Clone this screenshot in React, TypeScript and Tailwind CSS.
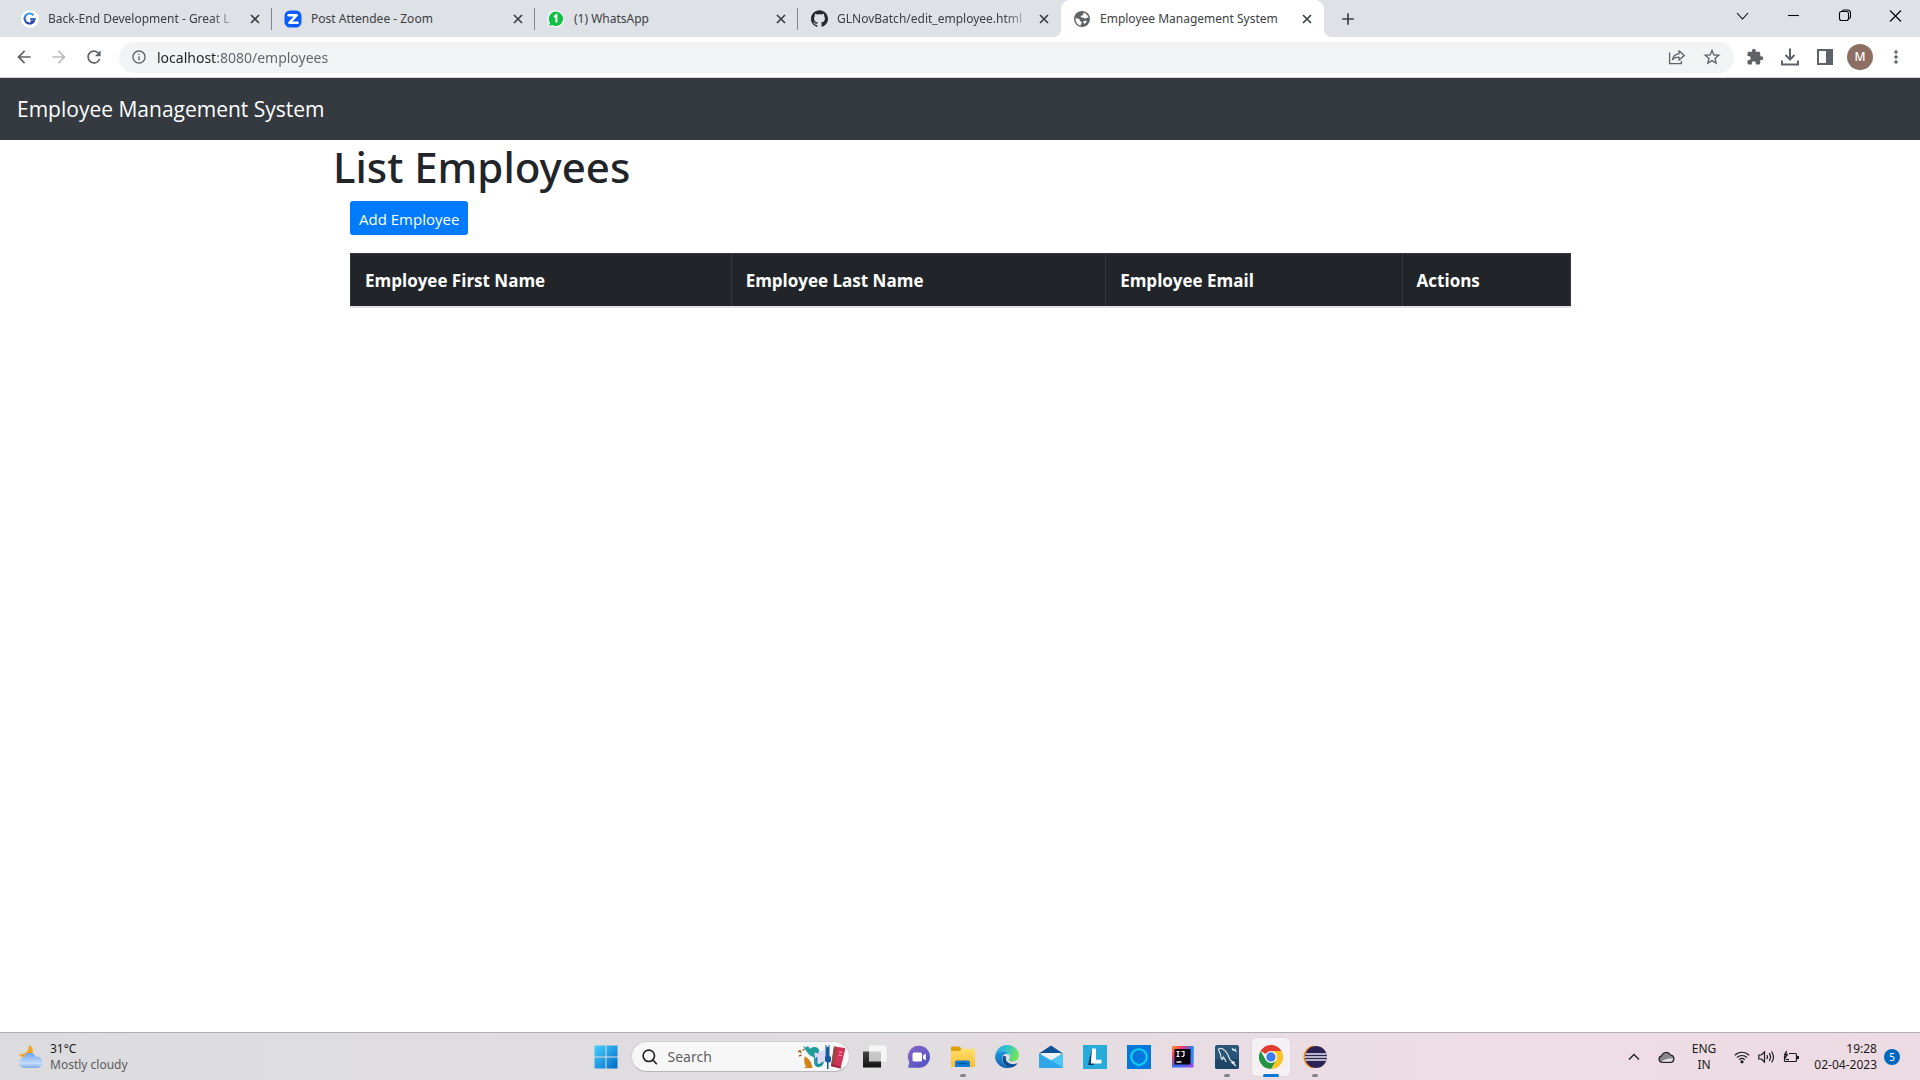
import React from "react";
import { MdArrowBack, MdArrowForward, MdRefresh, MdInfoOutline, MdStarBorder, MdExtension, MdMoreVert, MdAdd } from "react-icons/md";
import { SiGithub } from "react-icons/si";

type TabInfo = { title: string; icon: React.ReactNode; active?: boolean; fade?: boolean; divider?: boolean };

const GreatLearningIcon = () => (
  <svg viewBox="0 0 18 18" className="size-[18px]">
    <defs>
      <linearGradient id="gl" x1="0" y1="0" x2="0" y2="1">
        <stop offset="0" stopColor="#3aa0ea" />
        <stop offset="1" stopColor="#2a3fae" />
      </linearGradient>
    </defs>
    <circle cx="9" cy="9" r="9" fill="#fff" />
    <path d="M12.4 5.2A5 5 0 1 0 13.6 9H9.2" fill="none" stroke="url(#gl)" strokeWidth="2.2" />
    <path d="M9.5 11.2h3.6" stroke="#2a3fae" strokeWidth="1.6" />
  </svg>
);

const ZoomIcon = () => (
  <svg viewBox="0 0 18 18" className="size-[18px]">
    <rect x="0.5" y="0.5" width="17" height="17" rx="5.5" fill="#0b5cff" />
    <path d="M4.500 5.200h8.200L5.400 12.800h8.200" fill="none" stroke="#fff" strokeWidth="2.5" strokeLinejoin="round" strokeLinecap="round" />
  </svg>
);

const WhatsAppIcon = () => (
  <svg viewBox="0 0 18 18" className="size-[18px]">
    <path d="M9 .5A8.300 8.300 0 0 1 9 17.200c-1.500 0-2.800-.3-4-1L.5 17.500 1.800 13.200A8.300 8.300 0 0 1 9 .5z" fill="#fff" />
    <path d="M9 1.600a7.200 7.200 0 1 1-3.700 13.500L2 16l1-3.200A7.200 7.200 0 0 1 9 1.600z" fill="#0ec143" />
    <path d="M7 6.800 9.400 5.200v7.400" fill="none" stroke="#fff" strokeWidth="2" />
  </svg>
);

const GlobeIcon = () => (
  <svg viewBox="0 0 16 16" className="size-4">
    <circle cx="8" cy="8" r="8" fill="#5f6368" />
    <path d="M1.500 7.300c1.500.2 3.300.2 4 1 .6.800-.2 1.500.8 2 1.200.4 1.700.8 1.200 1.900-.3.800-.8 1-.8 2.300C3.500 14 1.300 11 1.500 7.300z" fill="#fff" />
    <path d="M9.300 1.600c2.700.5 4.700 2.700 5.200 5.400-.8-.6-1.300-.7-1.900-.1-.8.800-2.200.8-2.900 0-.6-.7-1.800.1-2.700-.6-.8-.7-.1-1.700 1-1.700.9 0 .6-.9 1.200-1.400.5-.4.400-1 .1-1.600z" fill="#fff" />
    <path d="M9.300 10.300c.9-.8 2.500-.9 3.500-.2-.5 1.400-1.400 2.300-2.500 3-.3-1.100-1.200-1.400-1-2.800z" fill="#fff" />
  </svg>
);

const tabs: TabInfo[] = [
  { title: "Back-End Development - Great L", icon: <GreatLearningIcon />, fade: true, divider: true },
  { title: "Post Attendee - Zoom", icon: <ZoomIcon />, divider: true },
  { title: "(1) WhatsApp", icon: <WhatsAppIcon />, divider: true },
  { title: "GLNovBatch/edit_employee.html", icon: <SiGithub className="size-[17px] text-[#24292f]" />, fade: true },
  { title: "Employee Management System", icon: <GlobeIcon />, active: true },
];

function Tab({ title, icon, active, fade, divider }: TabInfo) {
  return (
    <div
      className={
        "relative flex h-full min-w-0 max-w-[263px] flex-1 items-center pr-[9px] pl-[11px] " +
        (active
          ? "rounded-t-[9px] bg-white before:absolute before:bottom-0 before:-left-2 before:size-2 before:bg-[radial-gradient(circle_at_0_0,transparent_8px,#fff_8px)] after:absolute after:-right-2 after:bottom-0 after:size-2 after:bg-[radial-gradient(circle_at_100%_0,transparent_8px,#fff_8px)]"
          : "")
      }
    >
      <span className="flex size-5 shrink-0 items-center justify-center">{icon}</span>
      <span className="ml-2 flex min-w-0 flex-1 overflow-hidden text-[12px] whitespace-nowrap text-[#3c4043]">
        <span className={fade ? "[mask-image:linear-gradient(to_right,#000_90%,#0005)]" : ""}>{title}</span>
      </span>
      <button aria-label={"Close " + title} className="ml-1 flex size-4 shrink-0 items-center justify-center text-[#3c4043]">
        <svg viewBox="0 0 16 16" className="size-4">
          <path d="M4 4l8 8M12 4l-8 8" stroke="currentColor" strokeWidth="1.700" />
        </svg>
      </button>
      {divider && <span className="absolute right-0 h-[22px] w-px bg-[#80868b]" />}
    </div>
  );
}

function BrowserChrome() {
  return (
    <header className="font-['Noto_Sans',sans-serif]">
      <div className="flex h-[37px] bg-[#dee1e6]">
        <div className="flex min-w-0 flex-1 pl-[9px]">
          {tabs.map((t) => (
            <Tab key={t.title} {...t} />
          ))}
          <button aria-label="New tab" className="ml-3 flex w-6 items-center justify-center text-[#3c4043]">
            <MdAdd className="size-5" />
          </button>
        </div>
        <div className="flex h-8 text-black">
          {[
            ["Search tabs", "M5 7l5.500 6 5.500-6"],
            ["Minimize", "M5 9.500h11"],
            ["Restore", "M5.500 7.500a2 2 0 0 1 2-2h5a2 2 0 0 1 2 2v5a2 2 0 0 1-2 2h-5a2 2 0 0 1-2-2zM8 5.500a2 2 0 0 1 2-1.500h3.500a3 3 0 0 1 3 3v3.500a2 2 0 0 1-1.500 2"],
            ["Close window", "M5 4.500l11 11M16 4.500l-11 11"],
          ].map(([label, d]) => (
            <button key={label} aria-label={label} className="flex w-[51px] items-center justify-center">
              <svg viewBox="0 0 20 20" className="size-5">
                <path d={d} fill="none" stroke="currentColor" strokeWidth="1.100" />
              </svg>
            </button>
          ))}
        </div>
      </div>
      <div className="flex h-[41px] items-center border-b border-[#d5d7db] bg-white px-[14px] text-[#5f6368]">
        <button aria-label="Back" className="mr-[15px]"><MdArrowBack className="size-5" /></button>
        <button aria-label="Forward" className="mr-[15px] text-[#babcbe]"><MdArrowForward className="size-5" /></button>
        <button aria-label="Reload" className="mr-[15px]"><MdRefresh className="size-5" /></button>
        <div className="flex h-[31px] flex-1 items-center rounded-full bg-[#f1f3f4] pr-3 pl-3">
          <MdInfoOutline className="size-4" />
          <input
            aria-label="Address"
            defaultValue="localhost:8080/employees"
            className="ml-[10px] min-w-0 flex-1 bg-[linear-gradient(to_right,#202124_60px,#5f6368_60px)] bg-clip-text text-[14px] text-transparent outline-none"
          />
          <button aria-label="Share" className="mr-[15px]">
            <svg viewBox="0 0 20 20" className="size-5" fill="none" stroke="currentColor" strokeWidth="1.300">
              <path d="M2.600 5.500v11.200h11.800v-3" />
              <path d="M5.500 12.500c.6-3.700 3-5.500 6.500-5.700V3.800l5.300 4.700-5.300 4.600v-2.900c-2.700 0-4.700.6-6.500 2.300z" strokeLinejoin="round" />
            </svg>
          </button>
          <button aria-label="Bookmark this tab"><MdStarBorder className="size-5" /></button>
        </div>
        <div className="ml-3 flex items-center gap-4">
          <button aria-label="Extensions"><MdExtension className="size-[18px]" /></button>
          <button aria-label="Downloads">
            <svg viewBox="0 0 20 20" className="size-5" fill="none" stroke="currentColor" strokeWidth="2">
              <path d="M10 1.500v10.500M5.500 8l4.500 4.500L14.500 8M2 13.500v4h16v-4" />
            </svg>
          </button>
          <button aria-label="Side panel">
            <svg viewBox="0 0 18 18" className="size-[18px]">
              <path d="M1 1h16v16H1zM3 3v12h7V3z" fill="currentColor" fillRule="evenodd" />
            </svg>
          </button>
          <button aria-label="Profile" className="-mx-[3px] flex size-[26px] items-center justify-center rounded-full bg-[#8d6e63] text-[12px] font-medium text-white">M</button>
          <button aria-label="Menu"><MdMoreVert className="size-5" /></button>
        </div>
      </div>
    </header>
  );
}

const columns = [
  { label: "Employee First Name", width: "w-[31.200%]" },
  { label: "Employee Last Name", width: "w-[30.700%]" },
  { label: "Employee Email", width: "w-[24.300%]" },
  { label: "Actions", width: "w-[13.800%]" },
];

function Page() {
  return (
    <main className="flex-1 bg-white font-['Open_Sans',sans-serif] text-[#212529]">
      <nav className="flex h-[62px] items-center bg-[#343a40] px-[17px] pt-[2px]">
        <a href="#" className="text-[21px] text-white">Employee Management System</a>
      </nav>
      <div className="mx-auto max-w-[1254px]">
        <h1 className="mb-2 font-['Noto_Sans',sans-serif] text-[42px] leading-[53px] font-medium">List Employees</h1>
        <div className="pr-4 pl-[17px]">
          <a href="#" className="inline-flex h-[34px] items-center rounded-[3px] bg-[#007bff] px-[9px] pt-[3px] text-[15px] text-white">Add Employee</a>
          <table className="mt-[18px] w-full table-fixed border-collapse">
            <thead className="bg-[#212529] text-white">
              <tr className="h-[53px] border-b-2 border-b-[#dee2e6]">
                {columns.map((c) => (
                  <th key={c.label} className={"border-x border-t border-[#32383e] px-[14px] pt-[2px] text-left text-[17px] font-bold " + c.width}>
                    {c.label}
                  </th>
                ))}
              </tr>
            </thead>
          </table>
        </div>
      </div>
    </main>
  );
}

const S = ({ children }: { children: React.ReactNode }) => (
  <svg viewBox="0 0 24 24" className="size-6">{children}</svg>
);

const StartIcon = () => (
  <S>
    <defs>
      <linearGradient id="win" x1="0" y1="0" x2="1" y2="1">
        <stop offset="0" stopColor="#46d0ff" />
        <stop offset="1" stopColor="#0069c8" />
      </linearGradient>
    </defs>
    <path d="M.5.5h11v11H.5zM12.500.5h11v11h-11zM.5 12.500h11v11H.5zM12.500 12.500h11v11h-11z" fill="url(#win)" />
  </S>
);

const TaskViewIcon = () => (
  <S>
    <defs>
      <linearGradient id="tv" x1="0" y1="0" x2="0" y2="1">
        <stop offset="0" stopColor="#444" />
        <stop offset="1" stopColor="#111" />
      </linearGradient>
    </defs>
    <rect x="0" y="6.500" width="18" height="16" fill="url(#tv)" />
    <rect x="6" y=".5" width="17.500" height="16" fill="#fff" fillOpacity=".72" />
  </S>
);

const ChatIcon = () => (
  <S>
    <defs>
      <linearGradient id="chat" x1="0" y1="0" x2="1" y2="1">
        <stop offset="0" stopColor="#8a68c4" />
        <stop offset="1" stopColor="#4a4fc4" />
      </linearGradient>
    </defs>
    <path d="M12 .8a11 11 0 1 1 0 22H1l1.300-5.600A11 11 0 0 1 12 .8z" fill="url(#chat)" />
    <rect x="5.500" y="7.500" width="9.500" height="9" rx="1.500" fill="#fff" />
    <path d="M16 10.500l2.800-2v7l-2.800-2z" fill="#fff" />
  </S>
);

const ExplorerIcon = () => (
  <S>
    <defs>
      <linearGradient id="fold" x1="0" y1="0" x2="0" y2="1">
        <stop offset="0" stopColor="#ffe06f" />
        <stop offset="1" stopColor="#f9bd2c" />
      </linearGradient>
    </defs>
    <path d="M0 2.500a1 1 0 0 1 1-1h7.500l2 2.300-2 3.200H0z" fill="#e0a008" />
    <path d="M0 6h9l2-2.200h12a1 1 0 0 1 1 1V21a1 1 0 0 1-1 1H1a1 1 0 0 1-1-1z" fill="url(#fold)" />
    <path d="M4 22v-4.500a2 2 0 0 1 2-2h11a2 2 0 0 1 2 2V22z" fill="#0f7bd0" />
    <path d="M7 18.500h9" stroke="#075296" strokeWidth="1.300" />
  </S>
);

const EdgeIcon = () => (
  <S>
    <defs>
      <linearGradient id="eg1" x1="0" y1="0" x2="1" y2=".3">
        <stop offset="0" stopColor="#2a9fe0" />
        <stop offset=".5" stopColor="#30c3d0" />
        <stop offset="1" stopColor="#6fe35a" />
      </linearGradient>
      <linearGradient id="eg2" x1="0" y1="0" x2="0" y2="1">
        <stop offset="0" stopColor="#1f94dc" />
        <stop offset="1" stopColor="#0f63b4" />
      </linearGradient>
    </defs>
    <path d="M.3 10.500C1 4.500 6 0 12 0c7 0 12 5 12 10.300 0 4-3 6.200-6.300 6.200-2.600 0-4-1-4-1.800 0-.5 1.200-1 1.200-3 0-2.600-3-5.200-6.600-5.200C4.600 6.500 2 8 .3 10.500z" fill="url(#eg1)" />
    <path d="M0 12c.3-3.500 3.800-5.700 7.500-5.700 3.300 0 6 1.600 7 3.700-1-1-2.200-1.400-3.400-1.200-2.400.3-4 2.400-4 5 0 4.700 4 8.200 8.400 8.700A12 12 0 0 1 0 12z" fill="url(#eg2)" />
    <path d="M8.300 11c-2.200 4.500.6 9.800 5.700 11.500 4 .6 7-1.500 8.700-4.500-3 1.700-8 1.700-10.700-1.200-1.400-1.500-1.600-3.500-.7-5.300z" fill="#0c4b95" />
  </S>
);

const MailIcon = () => (
  <S>
    <path d="M0 8.500L12 .5l12 8z" fill="#0f4f96" />
    <path d="M2.500 8h19v8h-19z" fill="#eef1f4" />
    <path d="M0 8.500l12 7 12-7V23H0z" fill="#29a6ea" />
    <path d="M24 8.500V23L12 15.500z" fill="#4cc4f6" />
    <path d="M0 8.500L24 23H0z" fill="#2fa8ea" />
  </S>
);

const LIcon = () => (
  <S>
    <path d="M0 0h24v24H0z" fill="#27acd9" />
    <path d="M9 3.500L5 20h6z" fill="#123a63" />
    <path d="M9 3.500h4v11.300h5.500V18.500H7.800z" fill="#fff" />
  </S>
);

const AlexaIcon = () => (
  <S>
    <path d="M0 0h24v24H0z" fill="#0578dc" />
    <path d="M10.500 19.600A7.800 7.800 0 1 1 13.500 19.600L12 20.500z" fill="none" stroke="#12cdfa" strokeWidth="2" />
  </S>
);

const IdeaIcon = () => (
  <S>
    <defs>
      <linearGradient id="ij" x1="0" y1="0" x2="1" y2="1">
        <stop offset="0" stopColor="#fd9a1d" />
        <stop offset=".25" stopColor="#ee3b6f" />
        <stop offset=".55" stopColor="#2f6df5" />
        <stop offset="1" stopColor="#a04cf0" />
      </linearGradient>
      <linearGradient id="ij2" x1="0" y1="0" x2="1" y2="0">
        <stop offset=".6" stopColor="#1f8df5" stopOpacity="0" />
        <stop offset="1" stopColor="#1f9df5" />
      </linearGradient>
    </defs>
    <path d="M1 1h21.500v21.500H1z" fill="url(#ij)" />
    <path d="M12 1h10.500v17H12z" fill="url(#ij2)" />
    <path d="M3.500 4h16v15.500h-16z" fill="#0b0210" />
    <path d="M5.500 6.500h3M7 6.500v5M5.500 11.500h3M10.500 6.500h2.500v4l-1 1h-1.500" fill="none" stroke="#fff" strokeWidth="1.200" />
    <path d="M5.500 17h5" stroke="#fff" strokeWidth="1.400" />
  </S>
);

const MySqlIcon = () => (
  <S>
    <rect width="24" height="24" rx="2" fill="#2a5577" />
    <path d="M0 14h24v8a2 2 0 0 1-2 2H2a2 2 0 0 1-2-2z" fill="#1e4565" />
    <path d="M3.500 4c2-1.500 4.500-.5 7 2.200 2.500 2.800 3.500 6 4.500 8.800l5 3-3-.3 4 3.300M3.500 4c0 2 1.500 3.500 2 5.500.4 2 .4 4.500 1.500 5 .8.4 1-1.500 1.300-2.500 1.200 1.500 1.700 3.500 3 5" fill="none" stroke="#e9f1f6" strokeWidth="1.100" />
    <path d="M16.500 2.500l3 2 1-1.500.5 2.500 1.500 2-3-1.500-2-.5z" fill="#dfe9f0" />
  </S>
);

const ChromeIcon = () => (
  <S>
    <path d="M12 12L1.600 6A12 12 0 0 1 22.400 6z" fill="#e33b2e" />
    <path d="M12 6h10.400A12 12 0 0 1 12 24l5.200-9z" fill="#fcc31e" />
    <path d="M1.600 6l5.200 9L12 18l5.200-3L12 24A12 12 0 0 1 1.600 6z" fill="#229342" />
    <circle cx="12" cy="12" r="6" fill="#fff" />
    <circle cx="12" cy="12" r="4.700" fill="#3b7ded" />
  </S>
);

const EclipseIcon = () => (
  <S>
    <path d="M10 1.200A11 11 0 0 0 10 22.800 13 13 0 0 1 10 1.200z" fill="#f7941e" stroke="#f7941e" strokeWidth="1.500" />
    <circle cx="13" cy="12" r="11" fill="#2c2255" />
    <path d="M2.500 9h21M2 12h22M2.500 15h21" stroke="#e8e6f0" strokeWidth="1.600" />
  </S>
);

const apps: { name: string; icon: React.ReactNode; running?: boolean; active?: boolean }[] = [
  { name: "Task view", icon: <TaskViewIcon /> },
  { name: "Chat", icon: <ChatIcon /> },
  { name: "File Explorer", icon: <ExplorerIcon />, running: true },
  { name: "Microsoft Edge", icon: <EdgeIcon /> },
  { name: "Mail", icon: <MailIcon /> },
  { name: "Lenovo Vantage", icon: <LIcon /> },
  { name: "Alexa", icon: <AlexaIcon /> },
  { name: "IntelliJ IDEA", icon: <IdeaIcon /> },
  { name: "MySQL Workbench", icon: <MySqlIcon />, running: true },
  { name: "Google Chrome", icon: <ChromeIcon />, active: true },
  { name: "Eclipse", icon: <EclipseIcon />, running: true },
];

const SearchArt = () => (
  <svg viewBox="0 0 48 26" className="h-[26px] w-12">
    <path d="M17 8l11-2v12l-8 1z" fill="#dcd8f3" />
    <path d="M1 8l2-1.500 1 2.500M2 12l2.500-1M5.500 6.500l2-1.500" fill="none" stroke="#a8651a" strokeWidth="1.400" />
    <path d="M7.500 12.500l3 1.500c2.500 2.500 4 5 4.500 8l.5 2H7l2-1.500c-2-3-2-6-1.500-10z" fill="#d08317" />
    <path d="M6 2l3 1.500L11 2l2 3c3-3 8-2.500 9 1l-.5 3.500-3.500-1c-1.500 3 1.500 6 1.500 9-.2 3 2 4 4.500 1l3-1c-.5 4.500-4.500 7-8 5-3-2.200-1-6-2.500-9.500-4-1-6.500-4.500-10.500-11z" fill="#1f9c9a" />
    <path d="M20 13c-1 3 0 6 1 8l4-1" fill="none" stroke="#1c78b8" strokeWidth="1.200" />
    <path d="M28.500 1h1v2h2V1h1v11l1.500 1v4l-1.500 1.500h-1V25h-1.500v-6.500L28 17v-4l.5-1z" fill="#135a9e" />
    <path d="M37 2.500l11.500 1.500-5 20.500L34 22z" fill="#cf3355" />
    <path d="M37 2.500l3 .4-3.500 20-2.500-.9z" fill="#8e4a3c" />
    <path d="M34 22l9.500 2.500.5-2-9-2.500z" fill="#a5243f" />
    <path d="M42 8l3.500.5M41.300 11l3.500.5" stroke="#f0a0b0" strokeWidth="1" />
  </svg>
);

const WeatherIcon = () => (
  <svg viewBox="0 0 26 26" className="size-[26px]">
    <defs>
      <linearGradient id="cl" x1="0" y1="0" x2="0" y2="1">
        <stop offset="0" stopColor="#6ba2f0" />
        <stop offset=".7" stopColor="#c5dcfa" />
        <stop offset="1" stopColor="#7ba9ee" />
      </linearGradient>
    </defs>
    <path d="M11 1c5 2 5 9 1 12-4 2-9 1-11-3 5 1 10-2 10-9z" fill="#f5a524" />
    <path d="M6 24a5.200 5.200 0 0 1-.5-10.300 6.500 6.500 0 0 1 12.200-1.200A5.800 5.800 0 0 1 19.500 24z" fill="url(#cl)" />
  </svg>
);

function Taskbar() {
  return (
    <footer className="grid h-12 grid-cols-[1fr_auto_1fr] items-center border-t border-[#b0afb2] bg-[linear-gradient(to_right,#dcdcde,#e0dde0_45%,#eedde5_78%,#eddbe3)] font-['Noto_Sans',sans-serif] text-[12px] text-[#1b1b1b]">
      <button className="flex items-center gap-[6px] justify-self-start pl-[18px] text-left leading-4">
        <WeatherIcon />
        <span>
          <span className="block">31°C</span>
          <span className="block text-[#5c5c5e]">Mostly cloudy</span>
        </span>
      </button>
      <div className="flex h-full items-center">
        <button aria-label="Start" className="flex w-11 justify-center"><StartIcon /></button>
        <label className="mx-[3px] flex h-[31px] w-[219px] items-center rounded-full border border-[#cfced2] border-b-[#b8b7bb] bg-[#f7f7f8] pr-1 pl-[10px]">
          <svg viewBox="0 0 16 16" className="size-4 shrink-0">
            <path d="M12.500 6.800a5.700 5.700 0 1 1-11.400 0 5.700 5.700 0 0 1 11.400 0zM10.800 10.800l4 4.400" fill="none" stroke="#222" strokeWidth="1.700" />
          </svg>
          <input aria-label="Search" placeholder="Search" className="ml-[10px] min-w-0 flex-1 bg-transparent text-[14px] outline-none placeholder:text-[#5f5f61]" />
          <SearchArt />
        </label>
        {apps.map((a) => (
          <button
            key={a.name}
            aria-label={a.name}
            className={"relative mx-[3px] flex h-[38px] w-[38px] items-center justify-center rounded-[4px] " + (a.active ? "bg-[#f4f0f3] shadow-[0_0_1px_#b5aeb3]" : "")}
          >
            {a.icon}
            {a.running && <span className="absolute -bottom-px h-[3px] w-[6px] rounded-full bg-[#868488]" />}
            {a.active && <span className="absolute -bottom-px h-[3px] w-4 rounded-full bg-[#0078d4]" />}
          </button>
        ))}
      </div>
      <div className="flex items-center justify-self-end pr-5 leading-4">
        <button aria-label="Show hidden icons">
          <svg viewBox="0 0 12 12" className="size-3"><path d="M1 8.500l5-5 5 5" fill="none" stroke="#222" strokeWidth="1.400" /></svg>
        </button>
        <button aria-label="OneDrive" className="ml-[18px]">
          <svg viewBox="0 0 17 12" className="h-3 w-[17px]">
            <path d="M4 11.300a3.300 3.300 0 0 1-.3-6.500A4.800 4.800 0 0 1 12.500 4 3.700 3.700 0 0 1 13 11.300z" fill="#88888a" stroke="#222" strokeWidth="1.200" />
            <path d="M3.500 10.700c2-2.200 6-3.700 11.500-3.200-.2 2-1 3.200-2.500 3.200z" fill="#e4e0e4" />
          </svg>
        </button>
        <button className="ml-[17px] text-center"><span className="block">ENG</span><span className="block">IN</span></button>
        <button aria-label="Network, volume and battery" className="ml-[18px] flex items-center gap-2">
          <svg viewBox="0 0 16 14" className="h-[14px] w-4" fill="none" stroke="#1b1b1b" strokeWidth="1.200">
            <path d="M.8 5.200a10.300 10.300 0 0 1 14.400 0M3 7.500a7.200 7.200 0 0 1 10 0M5.200 9.700a4.200 4.200 0 0 1 5.600 0" />
            <circle cx="8" cy="11.800" r="1" fill="#1b1b1b" />
          </svg>
          <svg viewBox="0 0 17 14" className="h-[14px] w-[17px]" fill="none" stroke="#1b1b1b" strokeWidth="1.200">
            <path d="M.8 5v4h2.500l3.200 3V2L3.300 5zM8.800 5q1.300 2 0 4M11.200 3.200q2.600 3.800 0 7.600M13.500 1.500q4 5.500 0 11" />
          </svg>
          <svg viewBox="0 0 17 14" className="h-[14px] w-[17px]" fill="none" stroke="#1b1b1b" strokeWidth="1.200">
            <path d="M6 3.500h6.500a1 1 0 0 1 1 1v6a1 1 0 0 1-1 1H2.500a1 1 0 0 1-1-1V5.500" />
            <path d="M15 6v3" strokeWidth="2" />
            <path d="M3.500.8L1 5h1.500L1.800 9l3.200-4.800H3.300z" fill="#1b1b1b" strokeWidth=".6" />
            <path d="M3 9.500h3" />
          </svg>
        </button>
        <button className="ml-[14px] text-right"><span className="block">19:28</span><span className="block">02-04-2023</span></button>
        <span className="ml-[7px] flex size-4 items-center justify-center rounded-full bg-[#0067c0] text-[10px] text-white">5</span>
      </div>
    </footer>
  );
}

export default function App() {
  return (
    <div className="flex min-h-screen flex-col bg-white">
      <BrowserChrome />
      <Page />
      <Taskbar />
    </div>
  );
}
